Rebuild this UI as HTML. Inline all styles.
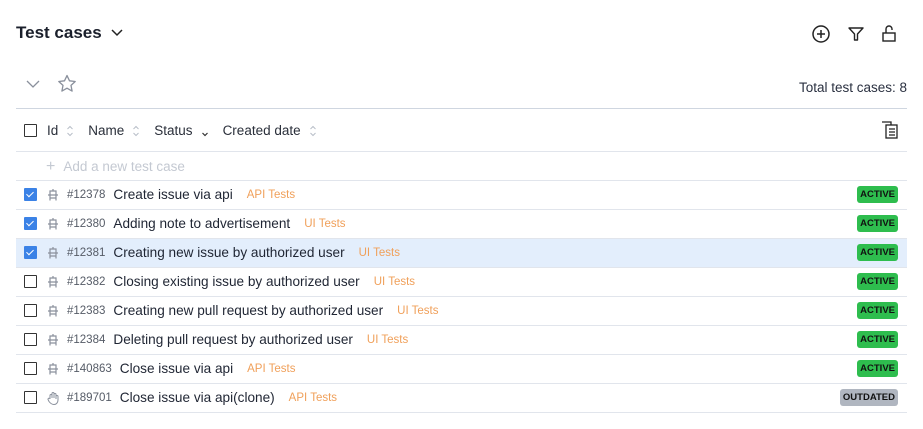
<!DOCTYPE html>
<html><head><style>
body{margin:0;width:923px;height:429px;background:#fff;font-family:"Liberation Sans",sans-serif;color:#1f2533;position:relative;overflow:hidden}
.abs{position:absolute}
.title{left:16px;top:23px;font-size:17px;font-weight:bold;color:#1a1f2b}
.line{left:16px;width:891px;height:1px;background:#e1e5ec}
.row{position:absolute;left:16px;width:891px;height:29px;display:flex;align-items:center;font-size:13.6px}
.cb{width:11px;height:11px;border:1.3px solid #333;margin-left:8px;border-radius:1px;flex:none}
.cb.on{background:#3b82e6;border-color:#3b82e6;position:relative}
.cb.on:after{content:"";position:absolute;left:3px;top:1px;width:3px;height:6px;border:solid #fff;border-width:0 1.5px 1.5px 0;transform:rotate(45deg)}
.ic{margin-left:9px;width:14px;height:14px;flex:none}
.id{margin-left:7px;font-size:11.5px;color:#555b66}
.nm{margin-left:8px;color:#1f2533}
.tg{margin-left:14px;font-size:11.5px;color:#f0a05a}
.bd{position:absolute;right:9px;font-size:9.5px;font-weight:bold;padding:3px 3px;border-radius:3px;color:#111}
.act{background:#2ebd4e}
.out{background:#b0b6c0}
.hd{font-size:13.5px;color:#2a2f3a}
.sort{margin:0 14px 0 8px}
</style></head><body>
<div class="abs title">Test cases <svg width="14" height="10" style="margin-left:4px" viewBox="0 0 14 10"><path d="M2 2l5 5 5-5" stroke="#222" stroke-width="1.5" fill="none"/></svg></div>
<svg class="abs" style="left:811px;top:24px" width="20" height="20" viewBox="0 0 20 20"><circle cx="10" cy="10" r="8" stroke="#222" stroke-width="1.5" fill="none"/><path d="M10 6v8M6 10h8" stroke="#222" stroke-width="1.5"/></svg>
<svg class="abs" style="left:847px;top:25px" width="18" height="18" viewBox="0 0 18 18"><path d="M2 3h14l-5.5 6v6h-3V9z" stroke="#222" stroke-width="1.4" fill="none" stroke-linejoin="round"/></svg>
<svg class="abs" style="left:881px;top:23px" width="16" height="20" viewBox="0 0 16 20"><rect x="2" y="10" width="12" height="8" stroke="#222" stroke-width="1.4" fill="none"/><path d="M5 10V6a3 3 0 0 1 6 0v1" stroke="#222" stroke-width="1.4" fill="none"/></svg>
<svg class="abs" style="left:26px;top:79px" width="14" height="10" viewBox="0 0 14 10"><path d="M1 2l6 6 6-6" stroke="#8a909c" stroke-width="1.3" fill="none"/></svg>
<svg class="abs" style="left:57px;top:74px" width="20" height="19" viewBox="0 0 20 19"><path d="M10 1.5l2.5 5.3 5.7.7-4.2 3.9 1.1 5.7-5.1-2.9-5.1 2.9 1.1-5.7L1.8 7.5l5.7-.7z" stroke="#8a909c" stroke-width="1.3" fill="none" stroke-linejoin="round"/></svg>
<div class="abs" style="right:16px;top:80px;font-size:13.5px;color:#2a3040">Total test cases: 8</div>
<div class="abs line" style="top:108px;background:#cfd6e0"></div>
<svg width="0" height="0" style="position:absolute"><defs>
<g id="srt"><path d="M1.5 5l2.5-2.5 2.5 2.5M1.5 9l2.5 2.5 2.5-2.5" stroke="#b8bec8" stroke-width="1" fill="none"/></g>
<g id="bot"><path d="M7 1v2M4 3h6v4H4zM2 7h10M4 7v5.5M10 7v5.5M4 10h6" stroke="#8a909c" stroke-width="1.2" fill="none"/></g></defs></svg>
<div class="row" style="top:116px"><div class="cb"></div><span class="hd" style="margin-left:10px">Id</span><svg class="sort" width="8" height="14"><use href="#srt"/></svg><span class="hd">Name</span><svg class="sort" width="8" height="14"><use href="#srt"/></svg><span class="hd">Status</span><svg class="sort" width="8" height="14"><path d="M1.5 9l2.5 2.5 2.5-2.5" stroke="#333" stroke-width="1.2" fill="none"/></svg><span class="hd">Created date</span><svg class="sort" width="8" height="14"><use href="#srt"/></svg>
<svg style="position:absolute;right:8px;top:5px" width="18" height="18" viewBox="0 0 18 18"><path d="M1 1h9v3" stroke="#222" stroke-width="1.3" fill="none"/><rect x="5" y="4" width="11" height="13" stroke="#222" stroke-width="1.3" fill="none"/><path d="M8 8h6M8 11h6M8 14h6" stroke="#222" stroke-width="1.2"/></svg></div>
<div class="abs line" style="top:151px"></div>
<div class="row" style="top:152px;color:#c4c9d2;font-size:13.5px"><span style="margin-left:30px;font-size:16px">+</span><span style="margin-left:8px">Add a new test case</span></div>
<div class="abs line" style="top:180px"></div>
<div class="abs" style="left:16px;top:239px;width:891px;height:28px;background:#e3eefc"></div>
<div class="abs line" style="top:209px"></div><div class="abs line" style="top:238px"></div><div class="abs line" style="top:267px"></div><div class="abs line" style="top:296px"></div><div class="abs line" style="top:325px"></div><div class="abs line" style="top:354px"></div><div class="abs line" style="top:383px"></div><div class="abs line" style="top:412px"></div>

<div class="row" style="top:180px"><div class="cb on"></div><svg class="ic" viewBox="0 0 14 14"><use href="#bot"/></svg><span class="id">#12378</span><span class="nm">Create issue via api</span><span class="tg">API Tests</span><span class="bd act">ACTIVE</span></div>
<div class="row" style="top:209px"><div class="cb on"></div><svg class="ic" viewBox="0 0 14 14"><use href="#bot"/></svg><span class="id">#12380</span><span class="nm">Adding note to advertisement</span><span class="tg">UI Tests</span><span class="bd act">ACTIVE</span></div>
<div class="row" style="top:238px"><div class="cb on"></div><svg class="ic" viewBox="0 0 14 14"><use href="#bot"/></svg><span class="id">#12381</span><span class="nm">Creating new issue by authorized user</span><span class="tg">UI Tests</span><span class="bd act">ACTIVE</span></div>
<div class="row" style="top:267px"><div class="cb"></div><svg class="ic" viewBox="0 0 14 14"><use href="#bot"/></svg><span class="id">#12382</span><span class="nm">Closing existing issue by authorized user</span><span class="tg">UI Tests</span><span class="bd act">ACTIVE</span></div>
<div class="row" style="top:296px"><div class="cb"></div><svg class="ic" viewBox="0 0 14 14"><use href="#bot"/></svg><span class="id">#12383</span><span class="nm">Creating new pull request by authorized user</span><span class="tg">UI Tests</span><span class="bd act">ACTIVE</span></div>
<div class="row" style="top:325px"><div class="cb"></div><svg class="ic" viewBox="0 0 14 14"><use href="#bot"/></svg><span class="id">#12384</span><span class="nm">Deleting pull request by authorized user</span><span class="tg">UI Tests</span><span class="bd act">ACTIVE</span></div>
<div class="row" style="top:354px"><div class="cb"></div><svg class="ic" viewBox="0 0 14 14"><use href="#bot"/></svg><span class="id">#140863</span><span class="nm">Close issue via api</span><span class="tg">API Tests</span><span class="bd act">ACTIVE</span></div>
<div class="row" style="top:383px"><div class="cb"></div><svg class="ic" viewBox="0 0 14 14"><path d="M4 8V4.5a1 1 0 0 1 2 0V7M6 7V2.5a1 1 0 0 1 2 0V7M8 7V3.5a1 1 0 0 1 2 0V8M10 8V5.5a1 1 0 0 1 2 0V9c0 3-2 4.5-4 4.5S4.5 12.5 3 10.5L2 8.5a1 1 0 0 1 2-.5" stroke="#8a909c" stroke-width="1" fill="none"/></svg><span class="id">#189701</span><span class="nm">Close issue via api(clone)</span><span class="tg">API Tests</span><span class="bd out">OUTDATED</span></div>
</body></html>
